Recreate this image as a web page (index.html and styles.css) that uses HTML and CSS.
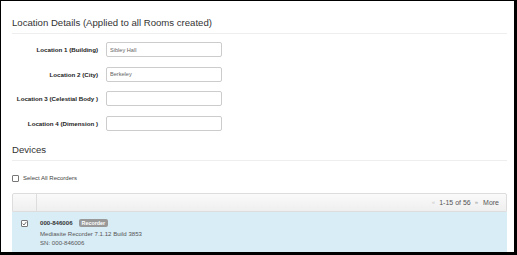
FILE: index.html
```html
<!DOCTYPE html>
<html lang="en">
<head>
    <meta charset="UTF-8">
    <meta name="viewport" content="width=device-width, initial-scale=1.0">
    <title>Room Setup</title>
    <link rel="stylesheet" href="styles.css">
</head>
<body>
    <div class="frame">
        <div class="page">
            <h3 class="section-title">Location Details (Applied to all Rooms created)</h3>

            <div class="location-form">
                <div class="form-row">
                    <label class="form-label">Location 1 (Building)</label>
                    <input class="form-input" type="text" value="Sibley Hall">
                </div>
                <div class="form-row">
                    <label class="form-label">Location 2 (City)</label>
                    <input class="form-input" type="text" value="Berkeley">
                </div>
                <div class="form-row">
                    <label class="form-label">Location 3 (Celestial Body )</label>
                    <input class="form-input" type="text" value="">
                </div>
                <div class="form-row">
                    <label class="form-label">Location 4 (Dimension )</label>
                    <input class="form-input" type="text" value="">
                </div>
            </div>

            <h3 class="section-title devices-title">Devices</h3>

            <div class="select-all">
                <span class="check-box"></span>
                <span>Select All Recorders</span>
            </div>

            <div class="device-table">
                <div class="table-head">
                    <div class="check-col"></div>
                    <div class="pager">
                        <span class="pager-arrow muted">&laquo;</span>
                        <span>1-15 of 56</span>
                        <span class="pager-arrow">&raquo;</span>
                        <span class="pager-more">More</span>
                    </div>
                </div>

                <!-- selected device -->
                <div class="table-row selected">
                    <div class="check-col">
                        <span class="check-box checked">
                            <svg viewBox="0 0 8 8" width="5" height="5">
                                <path d="M1 4.2 L3.2 6.4 L7 1.4" fill="none" stroke="#444" stroke-width="1.2"/>
                            </svg>
                        </span>
                    </div>
                    <div class="device-info">
                        <div class="device-name">
                            <span class="device-id">000-846006</span>
                            <span class="badge">Recorder</span>
                        </div>
                        <div class="device-line">Mediasite Recorder 7.1.12 Build 3853</div>
                        <div class="device-line">SN: 000-846006</div>
                    </div>
                </div>
            </div>
        </div>
    </div>
</body>
</html>
```

FILE: styles.css
```css
* {
    padding: 0;
    margin: 0;
    box-sizing: border-box;
}
body {
    background: #fff;
    font-family: "Liberation Sans", Arial, sans-serif;
    color: #333;
}
.frame {
    width: 517px;
    height: 255px;
    border-style: solid;
    border-color: #000;
    border-width: 1px 3px 3px 1px;
    overflow: hidden;
    background: #fff;
}
.page {
    padding: 16px 7px 0 11px;
}

/* ---------- headings ---------- */
.section-title {
    font-size: 9.6px;
    font-weight: normal;
    line-height: 12px;
    color: #333;
    padding-bottom: 4px;
    border-bottom: 1px solid #eee;
}
.devices-title {
    margin-top: 13px;
}

/* ---------- location form ---------- */
.location-form {
    padding-top: 8px;
}
.form-row {
    display: flex;
    align-items: center;
    height: 15px;
    margin-bottom: 9.5px;
}
.form-row:last-child {
    margin-bottom: 0;
}
.form-label {
    width: 86px;
    margin-right: 8px;
    text-align: right;
    font-size: 6.2px;
    font-weight: bold;
    color: #222;
}
.form-input {
    width: 116px;
    height: 15px;
    border: 1px solid #ccc;
    border-radius: 2px;
    padding: 0 3px;
    font-family: "Liberation Sans", Arial, sans-serif;
    font-size: 5.6px;
    color: #666;
    background: #fff;
    outline: none;
}

/* ---------- select all ---------- */
.select-all {
    display: flex;
    align-items: center;
    gap: 4px;
    margin-top: 14px;
    font-size: 6px;
    color: #444;
}
.check-box {
    display: inline-flex;
    align-items: center;
    justify-content: center;
    width: 7px;
    height: 7px;
    border: 1px solid #777;
    border-radius: 1px;
    background: #fff;
}

/* ---------- device table ---------- */
.device-table {
    margin-top: 11px;
}
.table-head {
    display: flex;
    height: 19px;
    border: 1px solid #ddd;
    border-radius: 2px 2px 0 0;
    background: linear-gradient(#fafafa, #efefef);
}
.table-head .check-col {
    width: 24px;
    border-right: 1px solid #ddd;
}
.pager {
    flex: 1;
    display: flex;
    align-items: center;
    justify-content: flex-end;
    gap: 4px;
    padding-right: 7px;
    font-size: 7px;
    color: #555;
}
.pager-arrow {
    color: #999;
    font-size: 6px;
}
.pager-arrow.muted {
    color: #ccc;
}
.pager-more {
    margin-left: 1px;
}
.table-row {
    display: flex;
    height: 45px;
}
.table-row.selected {
    background: #d9edf7;
}
.table-row .check-col {
    display: flex;
    align-items: flex-start;
    width: 24px;
    padding: 8px 0 0 9px;
}
.device-info {
    padding: 6px 0 0 4px;
    font-size: 6.1px;
    color: #555;
}
.device-name {
    display: flex;
    align-items: center;
    gap: 6px;
    height: 10px;
}
.device-id {
    font-weight: bold;
    color: #333;
}
.badge {
    display: inline-block;
    height: 8px;
    line-height: 8px;
    padding: 0 3px;
    border-radius: 2px;
    background: #999;
    color: #fff;
    font-size: 5.4px;
    font-weight: bold;
}
.device-line {
    line-height: 9px;
}
.device-name + .device-line {
    margin-top: 1px;
}
```
